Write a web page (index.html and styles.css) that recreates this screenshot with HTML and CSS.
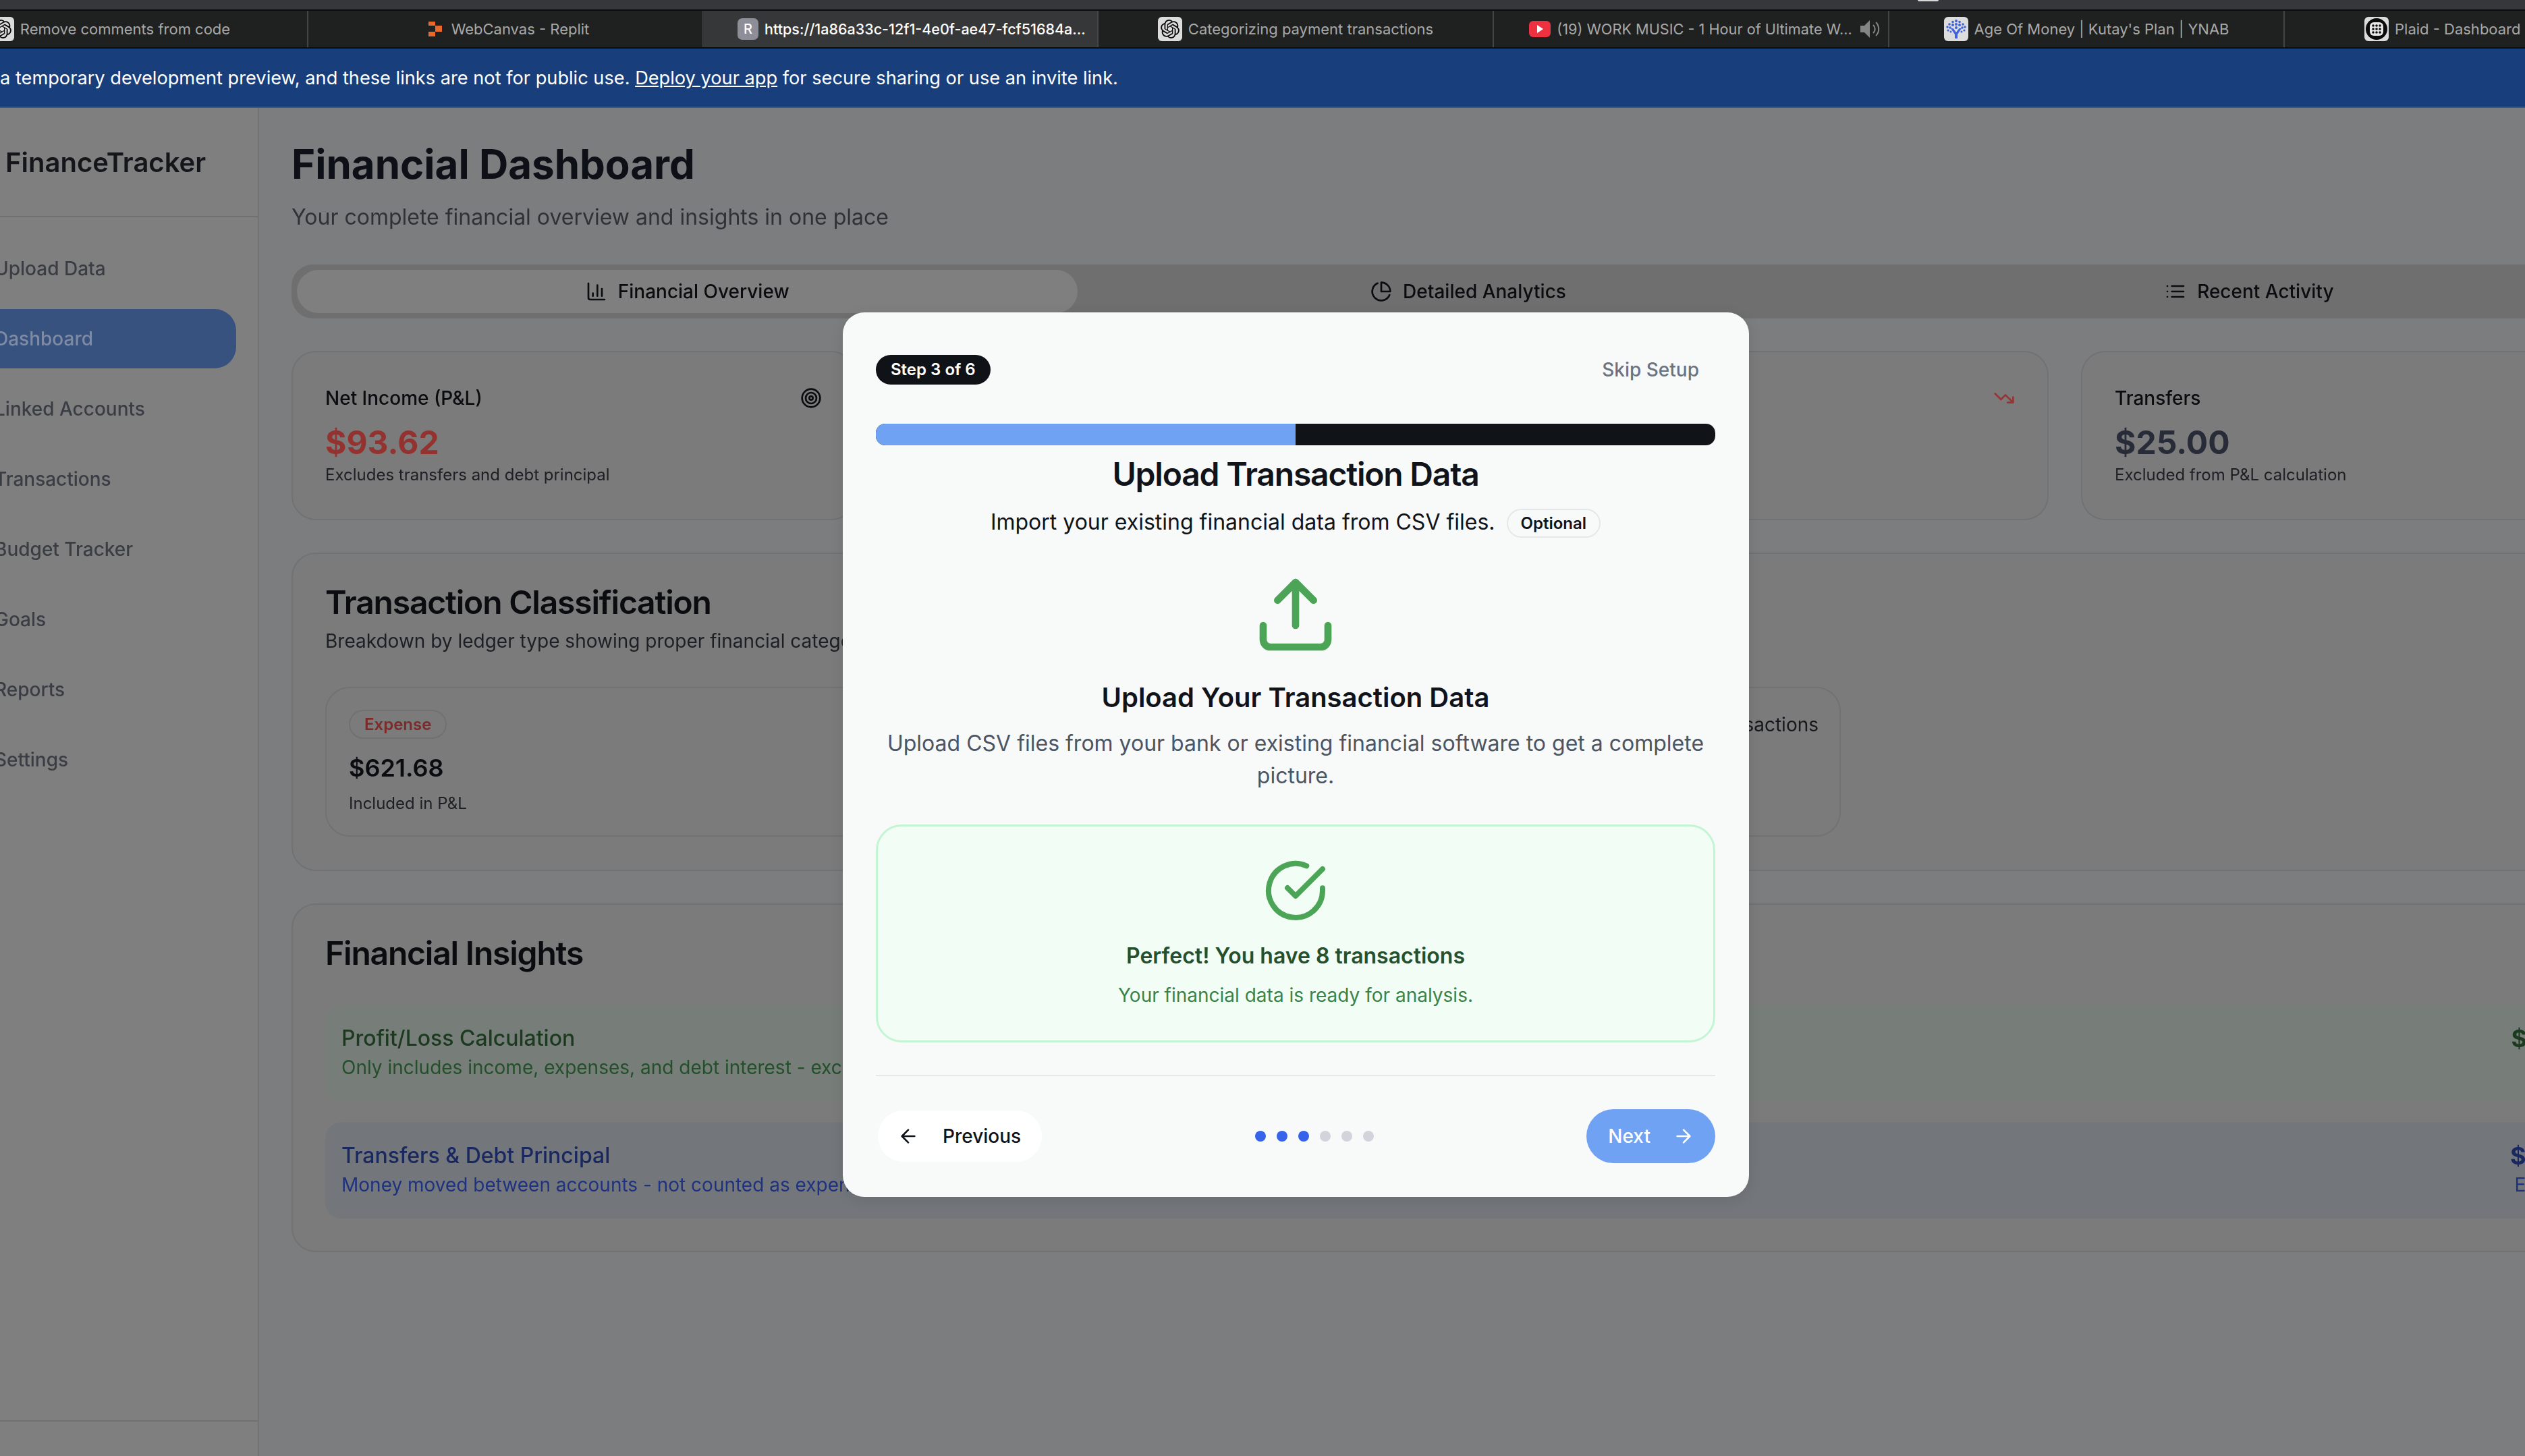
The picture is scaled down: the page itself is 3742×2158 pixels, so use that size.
FILE: index.html
```html
<!DOCTYPE html>
<html lang="en">
<head>
    <meta charset="UTF-8">
    <title>FinanceTracker - Financial Dashboard</title>
    <link rel="stylesheet" href="styles.css">
</head>
<body>
    <!-- browser chrome -->
    <div class="chrome-top"><span class="chrome-notch"></span></div>
    <div class="browser-tabs">
        <div class="tab">
            <svg class="favicon" viewBox="-3.500 -3.500 31 31"><rect x="-3.500" y="-3.500" width="31" height="31" rx="5" fill="#dcdcdc"/><path fill="#0b0b0b" d="M22.282 9.821a5.985 5.985 0 0 0-.516-4.91 6.046 6.046 0 0 0-6.51-2.9A6.065 6.065 0 0 0 4.981 4.18a5.985 5.985 0 0 0-3.998 2.9 6.046 6.046 0 0 0 .743 7.097 5.98 5.98 0 0 0 .51 4.911 6.051 6.051 0 0 0 6.515 2.9A5.985 5.985 0 0 0 13.26 24a6.056 6.056 0 0 0 5.772-4.206 5.99 5.99 0 0 0 3.997-2.9 6.056 6.056 0 0 0-.747-7.073zM13.26 22.43a4.476 4.476 0 0 1-2.876-1.04l.141-.081 4.779-2.758a.795.795 0 0 0 .392-.681v-6.737l2.02 1.168a.071.071 0 0 1 .038.052v5.583a4.504 4.504 0 0 1-4.494 4.494zM3.6 18.304a4.47 4.47 0 0 1-.535-3.014l.142.085 4.783 2.759a.771.771 0 0 0 .78 0l5.843-3.369v2.332a.08.08 0 0 1-.033.062L9.74 19.95a4.5 4.5 0 0 1-6.14-1.646zM2.34 7.896a4.485 4.485 0 0 1 2.366-1.973V11.6a.766.766 0 0 0 .388.676l5.815 3.355-2.02 1.168a.076.076 0 0 1-.071 0l-4.83-2.786A4.504 4.504 0 0 1 2.34 7.872zm16.597 3.855l-5.833-3.387L15.119 7.2a.076.076 0 0 1 .071 0l4.83 2.791a4.494 4.494 0 0 1-.676 8.105v-5.678a.79.79 0 0 0-.407-.667zm2.01-3.023l-.141-.085-4.774-2.782a.776.776 0 0 0-.785 0L9.409 9.23V6.897a.066.066 0 0 1 .028-.061l4.83-2.787a4.5 4.5 0 0 1 6.68 4.66zm-12.64 4.135l-2.02-1.164a.08.08 0 0 1-.038-.057V6.075a4.5 4.5 0 0 1 7.375-3.453l-.142.08L8.704 5.46a.795.795 0 0 0-.393.681zm1.097-2.365l2.602-1.5 2.607 1.5v2.999l-2.597 1.5-2.607-1.5z"/></svg>
            <span>Remove comments from code</span>
        </div>
        <div class="tab tab-replit">
            <svg class="favicon-replit" viewBox="0 0 20 22"><path fill="#e8692a" d="M0 0h10v6H0zM10 6h10v9H10zM0 15h10v7H0z"/></svg>
            <span>WebCanvas - Replit</span>
        </div>
        <div class="tab tab-active">
            <span class="favicon-r">R</span>
            <span>https://1a86a33c-12f1-4e0f-ae47-fcf51684a...</span>
        </div>
        <div class="tab">
            <svg class="favicon" viewBox="-3.500 -3.500 31 31"><rect x="-3.500" y="-3.500" width="31" height="31" rx="5" fill="#dcdcdc"/><path fill="#0b0b0b" d="M22.282 9.821a5.985 5.985 0 0 0-.516-4.91 6.046 6.046 0 0 0-6.51-2.9A6.065 6.065 0 0 0 4.981 4.18a5.985 5.985 0 0 0-3.998 2.9 6.046 6.046 0 0 0 .743 7.097 5.98 5.98 0 0 0 .51 4.911 6.051 6.051 0 0 0 6.515 2.9A5.985 5.985 0 0 0 13.26 24a6.056 6.056 0 0 0 5.772-4.206 5.99 5.99 0 0 0 3.997-2.9 6.056 6.056 0 0 0-.747-7.073zM13.26 22.43a4.476 4.476 0 0 1-2.876-1.04l.141-.081 4.779-2.758a.795.795 0 0 0 .392-.681v-6.737l2.02 1.168a.071.071 0 0 1 .038.052v5.583a4.504 4.504 0 0 1-4.494 4.494zM3.6 18.304a4.47 4.47 0 0 1-.535-3.014l.142.085 4.783 2.759a.771.771 0 0 0 .78 0l5.843-3.369v2.332a.08.08 0 0 1-.033.062L9.74 19.95a4.5 4.5 0 0 1-6.14-1.646zM2.34 7.896a4.485 4.485 0 0 1 2.366-1.973V11.6a.766.766 0 0 0 .388.676l5.815 3.355-2.02 1.168a.076.076 0 0 1-.071 0l-4.83-2.786A4.504 4.504 0 0 1 2.34 7.872zm16.597 3.855l-5.833-3.387L15.119 7.2a.076.076 0 0 1 .071 0l4.83 2.791a4.494 4.494 0 0 1-.676 8.105v-5.678a.79.79 0 0 0-.407-.667zm2.01-3.023l-.141-.085-4.774-2.782a.776.776 0 0 0-.785 0L9.409 9.23V6.897a.066.066 0 0 1 .028-.061l4.83-2.787a4.5 4.5 0 0 1 6.68 4.66zm-12.64 4.135l-2.02-1.164a.08.08 0 0 1-.038-.057V6.075a4.5 4.5 0 0 1 7.375-3.453l-.142.08L8.704 5.46a.795.795 0 0 0-.393.681zm1.097-2.365l2.602-1.5 2.607 1.5v2.999l-2.597 1.5-2.607-1.5z"/></svg>
            <span>Categorizing payment transactions</span>
        </div>
        <div class="tab tab-music">
            <svg class="favicon-yt" viewBox="0 0 32 24"><rect width="32" height="24" rx="6" fill="#ee3140"/><path d="M12 6l9 6-9 6z" fill="#fff"/></svg>
            <span>(19) WORK MUSIC - 1 Hour of Ultimate W...</span>
            <svg class="tab-sound" viewBox="0 0 32 32"><path d="M3 11h6l8-8v26l-8-8H3z" fill="#858585"/><path d="M22 10a8 8 0 0 1 0 12M26 6a14 14 0 0 1 0 20" fill="none" stroke="#858585" stroke-width="2"/></svg>
        </div>
        <div class="tab">
            <svg class="favicon" viewBox="0 0 36 36"><rect width="36" height="36" rx="6" fill="#dcdcdc"/><g fill="#3e62dc"><path d="M10 17h3.6l4.400 6 4.400-6H26l-6 9v6h-4v-6z"/><circle cx="18" cy="6" r="2"/><circle cx="13" cy="7.500" r="1.800"/><circle cx="23" cy="7.500" r="1.800"/><circle cx="18" cy="11" r="2"/><circle cx="18" cy="16" r="2"/><circle cx="13" cy="12" r="2"/><circle cx="23" cy="12" r="2"/><circle cx="8" cy="11" r="1.800"/><circle cx="28" cy="11" r="1.800"/><circle cx="5" cy="15" r="1.700"/><circle cx="31" cy="15" r="1.700"/><circle cx="9" cy="16" r="1.800"/><circle cx="27" cy="16" r="1.800"/><circle cx="6" cy="20" r="1.600"/><circle cx="30" cy="20" r="1.600"/><circle cx="10" cy="22" r="1.500"/><circle cx="26" cy="22" r="1.500"/></g></svg>
            <span>Age Of Money | Kutay's Plan | YNAB</span>
        </div>
        <div class="tab tab-last">
            <svg class="favicon" viewBox="0 0 36 36"><rect width="36" height="36" rx="6" fill="#dcdcdc"/><circle cx="18" cy="18" r="16" fill="#0b0b0b"/><rect x="8" y="8" width="20" height="20" rx="6" fill="#e8e8e8"/><g fill="#0b0b0b"><circle cx="13" cy="13" r="1.800"/><circle cx="18" cy="13" r="1.800"/><circle cx="23" cy="13" r="1.800"/><circle cx="13" cy="18" r="1.800"/><circle cx="18" cy="18" r="1.800"/><circle cx="23" cy="18" r="1.800"/><circle cx="13" cy="23" r="1.800"/><circle cx="18" cy="23" r="1.800"/><circle cx="23" cy="23" r="1.800"/></g></svg>
            <span>Plaid - Dashboard</span>
        </div>
    </div>

    <div class="banner">
        <p>a temporary development preview, and these links are not for public use. <a href="#">Deploy your app</a> for secure sharing or use an invite link.</p>
    </div>

    <div class="app">
        <!-- page behind the modal, dimmed by its backdrop -->
        <div class="page">
            <aside class="sidebar">
                <div class="sidebar-head">FinanceTracker</div>
                <nav class="sidebar-nav">
                    <a href="#">Upload Data</a>
                    <a href="#" class="active">Dashboard</a>
                    <a href="#">Linked Accounts</a>
                    <a href="#">Transactions</a>
                    <a href="#">Budget Tracker</a>
                    <a href="#">Goals</a>
                    <a href="#">Reports</a>
                    <a href="#">Settings</a>
                </nav>
                <div class="sidebar-foot"></div>
            </aside>

            <main class="main">
                <h1>Financial Dashboard</h1>
                <p class="lead">Your complete financial overview and insights in one place</p>

                <div class="view-tabs">
                    <div class="view-tab selected">
                        <svg class="lucide" viewBox="0 0 24 24"><path d="M3 3v16a2 2 0 0 0 2 2h16M18 17V9M13 17V5M8 17v-3"/></svg>
                        Financial Overview
                    </div>
                    <div class="view-tab">
                        <svg class="lucide" viewBox="0 0 24 24"><path d="M21.210 15.890A10 10 0 1 1 8 2.830"/><path d="M22 12A10 10 0 0 0 12 2v10z"/></svg>
                        Detailed Analytics
                    </div>
                    <div class="view-tab">
                        <svg class="lucide" viewBox="0 0 24 24"><path d="M3 12h.01M3 18h.01M3 6h.01M8 12h13M8 18h13M8 6h13"/></svg>
                        Recent Activity
                    </div>
                </div>

                <div class="stats">
                    <div class="stat">
                        <div class="stat-top">
                            <span>Net Income (P&amp;L)</span>
                            <svg class="lucide" viewBox="0 0 24 24"><circle cx="12" cy="12" r="10"/><circle cx="12" cy="12" r="6"/><circle cx="12" cy="12" r="2"/></svg>
                        </div>
                        <div class="stat-value red">$93.62</div>
                        <div class="stat-note">Excludes transfers and debt principal</div>
                    </div>
                    <div class="stat">
                        <div class="stat-top"><span>Income</span></div>
                        <div class="stat-value">$715.30</div>
                        <div class="stat-note">Revenue</div>
                    </div>
                    <div class="stat">
                        <div class="stat-top">
                            <span>Expenses</span>
                            <svg class="lucide trend" viewBox="0 0 24 24"><path d="M22 17l-8.500-8.500-5 5L2 7M16 17h6v-6"/></svg>
                        </div>
                        <div class="stat-value">$621.68</div>
                        <div class="stat-note">Included in P&amp;L</div>
                    </div>
                    <div class="stat">
                        <div class="stat-top"><span>Transfers</span></div>
                        <div class="stat-value slate">$25.00</div>
                        <div class="stat-note">Excluded from P&amp;L calculation</div>
                    </div>
                </div>

                <section class="panel panel-class">
                    <h2>Transaction Classification</h2>
                    <p class="panel-sub">Breakdown by ledger type showing proper financial categories</p>
                    <div class="ledger-grid">
                        <div class="ledger">
                            <span class="pill">Expense</span>
                            <div class="ledger-value">$621.68</div>
                            <div class="ledger-note">Included in P&amp;L</div>
                        </div>
                        <div class="ledger ledger-count">
                            <span class="ledger-transactions">8 transactions</span>
                        </div>
                    </div>
                </section>

                <section class="panel panel-insights">
                    <h2>Financial Insights</h2>
                    <div class="insight green">
                        <div>
                            <h3>Profit/Loss Calculation</h3>
                            <p>Only includes income, expenses, and debt interest - excludes transfers</p>
                        </div>
                        <div class="insight-side"><strong>$93.62</strong></div>
                    </div>
                    <div class="insight blue">
                        <div>
                            <h3>Transfers &amp; Debt Principal</h3>
                            <p>Money moved between accounts - not counted as expenses</p>
                        </div>
                        <div class="insight-side"><strong>$25.00</strong><span>Excluded</span></div>
                    </div>
                </section>
            </main>
        </div>

        <div class="modal">
            <div class="modal-head">
                <span class="step-badge">Step 3 of 6</span>
                <a href="#" class="skip">Skip Setup</a>
            </div>
            <div class="progress"><div class="progress-fill" style="width: 50%"></div></div>
            <h2 class="modal-title">Upload Transaction Data</h2>
            <div class="modal-sub">
                <span class="modal-sub-text">Import your existing financial data from CSV files.</span>
                <span class="optional">Optional</span>
            </div>

            <svg class="upload-icon" viewBox="0 0 24 24"><path d="M21 15v4a2 2 0 0 1-2 2H5a2 2 0 0 1-2-2v-4M17 8l-5-5-5 5M12 3v12"/></svg>
            <h3 class="upload-title">Upload Your Transaction Data</h3>
            <p class="upload-desc">Upload CSV files from your bank or existing financial software to get a complete picture.</p>

            <div class="success">
                <svg class="success-icon" viewBox="0 0 24 24"><path d="M22 11.080V12a10 10 0 1 1-5.930-9.140M22 4L12 14.010l-3-3"/></svg>
                <div class="success-title">Perfect! You have 8 transactions</div>
                <div class="success-note">Your financial data is ready for analysis.</div>
            </div>

            <div class="modal-foot">
                <button class="btn btn-prev">
                    <svg class="lucide" viewBox="0 0 24 24"><path d="M12 19l-7-7 7-7M19 12H5"/></svg>
                    Previous
                </button>
                <div class="dots">
                    <span class="dot on"></span><span class="dot on"></span><span class="dot on"></span><span class="dot"></span><span class="dot"></span><span class="dot"></span>
                </div>
                <button class="btn btn-next">
                    Next
                    <svg class="lucide" viewBox="0 0 24 24"><path d="M5 12h14M12 5l7 7-7 7"/></svg>
                </button>
            </div>
        </div>
    </div>
</body>
</html>
```

FILE: styles.css
```css
* {
    box-sizing: border-box;
}
html, body {
    margin: 0;
    height: 100%;
}
body {
    font-family: 'Inter', 'Liberation Sans', sans-serif;
    overflow: hidden;
    background: #7c7d7e;
    display: flex;
    flex-direction: column;
}
h1, h2, h3, p {
    margin: 0;
}
a {
    color: inherit;
    text-decoration: none;
}
.lucide {
    width: 32px;
    height: 32px;
    flex: none;
    fill: none;
    stroke: currentColor;
    stroke-width: 2;
    stroke-linecap: round;
    stroke-linejoin: round;
}

/* browser chrome */
.chrome-top {
    height: 14px;
    flex: none;
    background: #36373a;
}
.chrome-notch {
    display: block;
    width: 31px;
    height: 2px;
    margin-left: 2842px;
    background: #d8d8d8;
    border-radius: 0 0 8px 8px;
}
.browser-tabs {
    height: 58px;
    flex: none;
    display: flex;
    margin-left: -129px;
    background: #1f2020;
    border-top: 2px solid #0d0d0d;
    border-bottom: 2px solid #0d0d0d;
}
.tab {
    width: 586px;
    flex: none;
    display: flex;
    align-items: center;
    justify-content: center;
    gap: 9px;
    font-size: 22px;
    color: #a8a9a8;
    white-space: nowrap;
    border-right: 2px solid #444546;
}
.tab-active {
    background: #363739;
    color: #fff;
    font-size: 21.500px;
    font-weight: 500;
    margin-left: -1px;
    padding-left: 34px;
}
.tab-replit {
    padding-left: 10px;
}
.tab-music {
    padding-left: 40px;
    font-size: 21.700px;
}
.tab-last {
    justify-content: flex-start;
    padding-left: 118px;
    border-right: 0;
}
.favicon {
    width: 36px;
    height: 36px;
    flex: none;
}
.favicon-replit {
    width: 20px;
    height: 22px;
    margin-right: 5px;
    flex: none;
}
.favicon-r {
    width: 31px;
    height: 32px;
    border-radius: 7px;
    background: #8e8e99;
    color: #fff;
    font-size: 20px;
    line-height: 32px;
    text-align: center;
}
.favicon-yt {
    width: 32px;
    height: 24px;
    flex: none;
}
.tab-sound {
    width: 32px;
    height: 32px;
    flex: none;
}

.banner {
    height: 88px;
    flex: none;
    display: flex;
    align-items: center;
    background: #183f7c;
    border-bottom: 2px solid #34598f;
    color: #fff;
    font-size: 27.200px;
    white-space: nowrap;
}
.banner a {
    text-decoration: underline;
}

/* dashboard behind the modal */
.app {
    flex: 1;
    position: relative;
    overflow: hidden;
}
.page {
    display: flex;
    height: 100%;
    filter: blur(0.6px);
}
.sidebar {
    width: 384px;
    flex: none;
    display: flex;
    flex-direction: column;
    background: #7f7f7f;
    border-right: 2px solid #727375;
}
.sidebar-head {
    height: 162px;
    flex: none;
    padding: 59px 0 0 8px;
    font-size: 40px;
    line-height: 44px;
    font-weight: 600;
    color: #14161a;
    border-bottom: 2px solid #6e7073;
}
.sidebar-nav {
    flex: 1;
    display: flex;
    flex-direction: column;
    gap: 16px;
    padding-top: 32px;
    margin-left: -40px;
    padding-right: 32px;
}
.sidebar-nav a {
    height: 88px;
    flex: none;
    display: flex;
    align-items: center;
    padding-left: 32px;
    border-radius: 32px;
    font-size: 28px;
    font-weight: 500;
    color: #3a3d44;
}
.sidebar-nav a.active {
    background: #38527f;
    color: #7f8ba3;
}
.sidebar-foot {
    height: 53px;
    flex: none;
    border-top: 2px solid #6e7073;
}
.main {
    width: 3536px;
    flex: none;
    padding: 47px 0 0 48px;
}
h1 {
    font-size: 60px;
    line-height: 72px;
    font-weight: 700;
    color: #0e1018;
}
.lead {
    margin-top: 19px;
    font-size: 32px;
    line-height: 48px;
    color: #2f3137;
}
.view-tabs {
    margin-top: 46px;
    height: 80px;
    display: grid;
    grid-template-columns: repeat(3, 1fr);
    padding: 8px;
    background: #6f6f6f;
    border-radius: 32px;
}
.view-tab {
    display: flex;
    align-items: center;
    justify-content: center;
    gap: 16px;
    font-size: 28px;
    font-weight: 500;
    color: #0b0c10;
    border-radius: 32px;
}
.view-tab.selected {
    background: #7f7f7f;
}
.stats {
    margin-top: 48px;
    display: grid;
    grid-template-columns: repeat(4, 1fr);
    gap: 48px;
}
.stat {
    height: 251px;
    padding: 48px 48px 0;
    background: #7b7b7b;
    border: 2px solid #717274;
    border-radius: 36px;
}
.stat-top {
    display: flex;
    justify-content: space-between;
    align-items: center;
    height: 40px;
    font-size: 28px;
    font-weight: 500;
    color: #0b0c10;
}
.stat-top .lucide {
    color: #0b0c10;
}
.stat-top .trend {
    color: #963432;
}
.stat-value {
    margin-top: 14px;
    font-size: 48px;
    line-height: 64px;
    font-weight: 700;
    color: #0e1018;
}
.stat-value.red {
    color: #943230;
}
.stat-value.slate {
    color: #282c38;
}
.stat-note {
    font-size: 24px;
    line-height: 32px;
    color: #1d1f24;
}
.panel {
    margin-top: 48px;
    background: #7b7b7b;
    border: 2px solid #717274;
    border-radius: 36px;
    padding: 42px 48px 0;
}
.panel h2 {
    font-size: 48px;
    line-height: 60px;
    font-weight: 600;
    letter-spacing: -1.200px;
    color: #0b0c10;
}
.panel-class {
    height: 472px;
}
.panel-sub {
    margin-top: 7px;
    font-size: 28px;
    line-height: 40px;
    color: #1d1f24;
}
.ledger-grid {
    margin-top: 48px;
    width: 2246px;
    display: grid;
    grid-template-columns: 1fr 1fr;
    gap: 32px;
}
.ledger {
    height: 222px;
    padding: 32px 31px 0 33px;
    border: 2px solid #717274;
    border-radius: 36px;
}
.ledger-count {
    display: flex;
    justify-content: flex-end;
}
.ledger-transactions {
    margin-top: 2px;
    font-size: 28px;
    line-height: 40px;
    color: #16181d;
}
.pill {
    display: inline-block;
    height: 43px;
    padding: 0 21px;
    border: 2px solid #707174;
    border-radius: 22px;
    font-size: 24px;
    line-height: 39px;
    font-weight: 600;
    color: #7e2a2a;
}
.ledger-value {
    margin-top: 17px;
    font-size: 36px;
    line-height: 52px;
    font-weight: 600;
    color: #0b0c10;
}
.ledger-note {
    margin-top: 11px;
    font-size: 24px;
    line-height: 32px;
    color: #1d1f24;
}
.panel-insights {
    height: 517px;
}
.panel-insights h2 {
    margin-bottom: 46px;
}
.insight {
    height: 143px;
    display: flex;
    justify-content: space-between;
    padding: 26px 22px 0 24px;
    border-radius: 24px;
}
.insight + .insight {
    margin-top: 31px;
}
.insight h3 {
    font-size: 32px;
    line-height: 48px;
    font-weight: 500;
}
.insight p {
    font-size: 28px;
    line-height: 38px;
}
.insight.green {
    background: #777d78;
}
.insight.green h3, .insight.green strong {
    color: #1b3a20;
}
.insight.green p {
    color: #234f2b;
}
.insight.blue {
    background: #73777b;
}
.insight.blue h3, .insight.blue strong {
    color: #1a2860;
}
.insight.blue p, .insight.blue span {
    color: #1f3280;
}
.insight-side {
    display: flex;
    flex-direction: column;
    align-items: flex-end;
    font-size: 28px;
    line-height: 38px;
}
.insight-side strong {
    font-size: 36px;
    line-height: 48px;
    font-weight: 700;
}

/* onboarding modal */
.modal {
    position: absolute;
    left: 1249px;
    top: 303px;
    width: 1343px;
    height: 1311px;
    padding: 63px 50px 0 49px;
    background: #f8fafa;
    border-radius: 32px;
    box-shadow: 0 4px 20px rgba(0, 0, 0, 0.1);
    color: #10141a;
}
.modal-head {
    display: flex;
    justify-content: space-between;
    align-items: center;
    height: 44px;
}
.step-badge {
    height: 44px;
    padding: 0 22px;
    border-radius: 22px;
    background: #0f1216;
    color: #fff;
    font-size: 24px;
    line-height: 44px;
    font-weight: 600;
}
.skip {
    padding-right: 24px;
    font-size: 28px;
    font-weight: 500;
    color: #6b7280;
}
.progress {
    margin-top: 58px;
    height: 32px;
    background: #101419;
    border-radius: 14px;
    overflow: hidden;
}
.progress-fill {
    height: 100%;
    background: #70a2f3;
}
.modal-title {
    margin-top: 13px;
    font-size: 48px;
    line-height: 60px;
    font-weight: 600;
    letter-spacing: -1.200px;
    text-align: center;
}
.modal-sub {
    margin-top: 21px;
    display: flex;
    justify-content: center;
    align-items: center;
    gap: 17px;
    height: 43px;
    font-size: 32px;
}
.modal-sub-text {
    padding-bottom: 4px;
}
.optional {
    height: 43px;
    padding: 0 19px;
    border: 2px solid #e5e7eb;
    border-radius: 22px;
    font-size: 24px;
    line-height: 39px;
    font-weight: 600;
}
.upload-icon {
    display: block;
    width: 128px;
    height: 128px;
    margin: 50px auto 0;
    fill: none;
    stroke: #4ca556;
    stroke-width: 2;
    stroke-linecap: round;
    stroke-linejoin: round;
}
.upload-title {
    margin-top: 31px;
    font-size: 40px;
    line-height: 56px;
    font-weight: 600;
    text-align: center;
}
.upload-desc {
    margin-top: 16px;
    font-size: 32px;
    line-height: 48px;
    color: #4b5563;
    text-align: center;
}
.success {
    margin-top: 48px;
    height: 323px;
    padding-top: 47px;
    background: #f2fdf5;
    border: 3px solid #c4f5d3;
    border-radius: 38px;
    text-align: center;
}
.success-icon {
    display: block;
    width: 96px;
    height: 96px;
    margin: 0 auto;
    fill: none;
    stroke: #4ca556;
    stroke-width: 2;
    stroke-linecap: round;
    stroke-linejoin: round;
}
.success-title {
    margin-top: 27px;
    font-size: 32px;
    line-height: 44px;
    font-weight: 600;
    color: #24502d;
}
.success-note {
    margin-top: 16px;
    font-size: 28px;
    line-height: 40px;
    color: #3a8449;
}
.modal-foot {
    margin-top: 48px;
    padding-top: 49px;
    border-top: 2px solid #e5e7eb;
    display: flex;
    justify-content: space-between;
    align-items: center;
}
.btn {
    display: flex;
    align-items: center;
    border: 0;
    font-family: inherit;
    font-size: 28px;
    font-weight: 500;
}
.btn-prev {
    height: 76px;
    margin-left: 3px;
    padding: 0 31px 0 29px;
    gap: 35px;
    background: #fff;
    color: #10141a;
    border-radius: 38px;
}
.btn-next {
    height: 80px;
    padding: 0 31px 0 32px;
    gap: 33px;
    background: #70a2f3;
    color: #fff;
    border-radius: 40px;
}
.dots {
    display: flex;
    gap: 16px;
}
.dot {
    width: 16px;
    height: 16px;
    border-radius: 50%;
    background: #d1d5db;
}
.dot.on {
    background: #3563e9;
}
```
